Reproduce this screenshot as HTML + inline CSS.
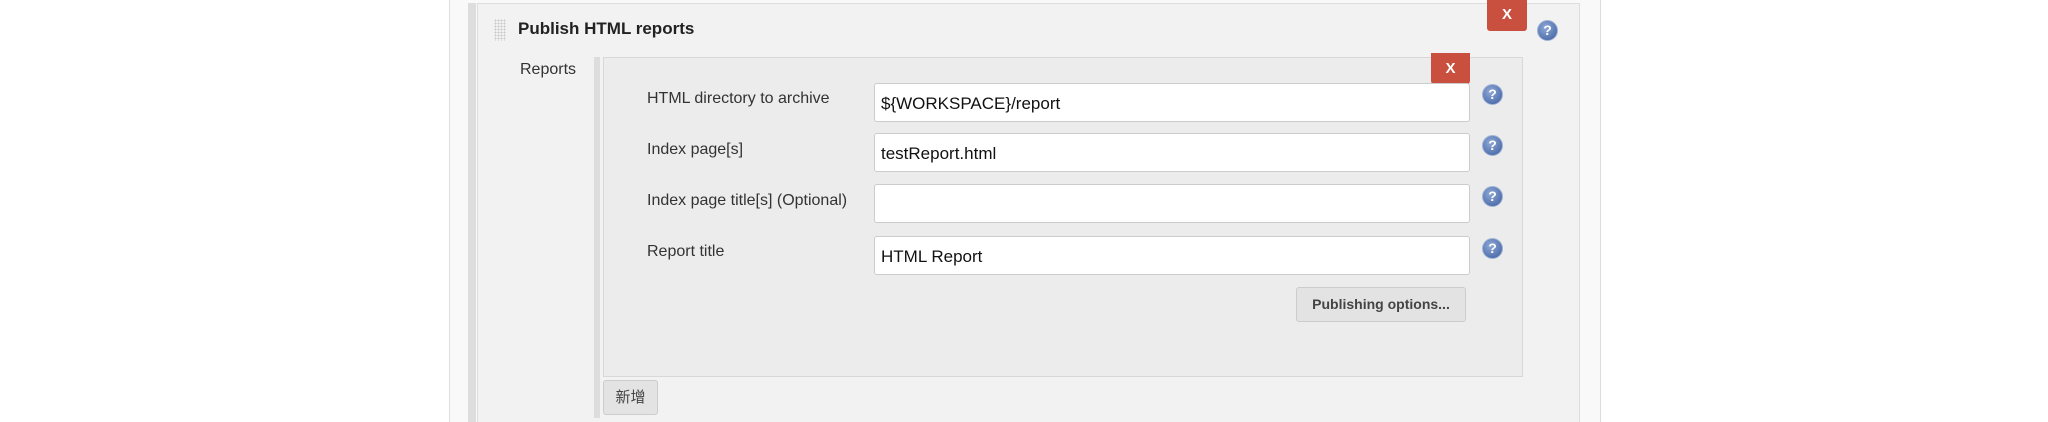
<!DOCTYPE html>
<html><head><meta charset="utf-8"><style>
*{box-sizing:border-box;margin:0;padding:0}
body{width:2048px;height:422px;background:#fff;position:relative;overflow:hidden;font-family:"Liberation Sans","Noto Sans CJK SC",sans-serif;color:#333}
.a{position:absolute}
.inp{position:absolute;left:874px;width:596px;height:39px;background:#fff;border:1px solid #ccc;border-radius:3px;font-size:17px;padding:10px 6px;color:#111}
.lbl{position:absolute;left:647px;font-size:16px;color:#333}
.help{position:absolute;width:21px;height:21px;border-radius:50%;background:radial-gradient(circle at 40% 35%,#8fa9d6,#3b5c9e);border:1.5px solid #9fb3d6;color:#fff;font:bold 14px "Liberation Sans",sans-serif;text-align:center;line-height:18px}
.x{position:absolute;background:#c9503f;color:#fff;font:bold 15px "Liberation Sans",sans-serif;text-align:center;border-radius:0 0 3px 3px}
</style></head><body>
<div class="a" style="left:449px;top:0;width:1152px;height:422px;background:#f9f9f9;border-left:1px solid #ddd;border-right:1px solid #ddd"></div>
<div class="a" style="left:468px;top:3px;width:8px;height:419px;background:#ddd"></div>
<div class="a" style="left:477px;top:3px;width:1103px;height:419px;background:#f2f2f2;border:1px solid #ddd;border-bottom:none"></div>
<div class="a" style="left:494px;top:19px;width:12px;height:22px;background-image:radial-gradient(#c8c8c8 40%,transparent 45%);background-size:3px 3px"></div>
<div class="a" style="left:518px;top:19px;font-weight:bold;font-size:17px;color:#222">Publish HTML reports</div>
<div class="x" style="left:1487px;top:0;width:40px;height:31px;line-height:29px">X</div>
<div class="help" style="left:1537px;top:20px">?</div>
<div class="a" style="left:520px;top:61px;font-size:16px;color:#333">Reports</div>
<div class="a" style="left:594px;top:57px;width:6px;height:361px;background:#ddd"></div>
<div class="a" style="left:603px;top:57px;width:920px;height:320px;background:#ececec;border:1px solid #d8d8d8"></div>
<div class="x" style="left:1431px;top:53px;width:39px;height:31px;line-height:31px">X</div>
<div class="lbl" style="top:90px">HTML directory to archive</div>
<div class="lbl" style="top:141px">Index page[s]</div>
<div class="lbl" style="top:192px">Index page title[s] (Optional)</div>
<div class="lbl" style="top:243px">Report title</div>
<div class="inp" style="top:83px">${WORKSPACE}/report</div>
<div class="inp" style="top:133px">testReport.html</div>
<div class="inp" style="top:184px"></div>
<div class="inp" style="top:236px">HTML Report</div>
<div class="help" style="left:1482px;top:84px">?</div>
<div class="help" style="left:1482px;top:135px">?</div>
<div class="help" style="left:1482px;top:186px">?</div>
<div class="help" style="left:1482px;top:238px">?</div>
<div class="a" style="left:1296px;top:287px;width:170px;height:35px;background:#e3e3e3;border:1px solid #ccc;border-radius:3px;font-weight:bold;font-size:14px;color:#444;text-align:center;line-height:33px">Publishing options...</div>
<div class="a" style="left:603px;top:380px;width:55px;height:35px;background:#e3e3e3;border:1px solid #ccc;border-radius:3px;font-size:15px;color:#444;text-align:center;line-height:33px">新增</div>
</body></html>
